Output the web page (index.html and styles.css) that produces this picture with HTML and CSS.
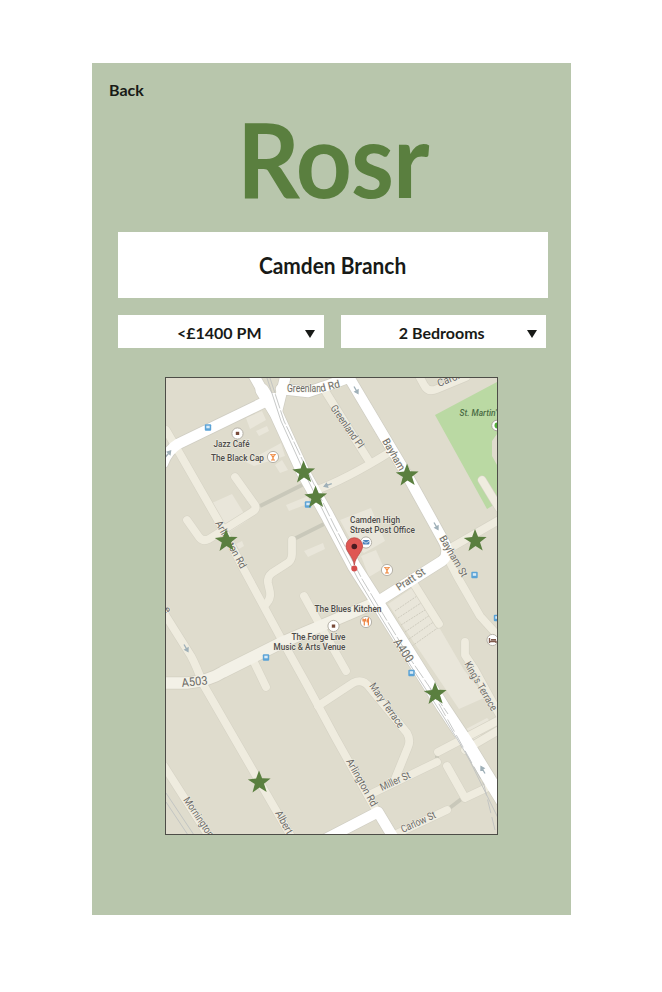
FILE: index.html
```html
<!DOCTYPE html>
<html lang="en">
<head>
<meta charset="utf-8">
<title>Rosr</title>
<link rel="stylesheet" href="styles.css">
</head>
<body>
<main class="panel">
  <a class="back">Back</a>
  <h1 class="logo"><span class="logo-text">Rosr</span></h1>
  <div class="branch"><span class="branch-name">Camden Branch</span></div>
  <div class="filters">
    <div class="select"><span>&lt;£1400 PM</span><i class="arrow"></i></div>
    <div class="select"><span>2 Bedrooms</span><i class="arrow"></i></div>
  </div>
  <div class="map">
  <svg viewBox="166 378 331 456" width="331" height="456">
    <defs>
      <polygon id="star" points="0,-11.5 3.1,-3.8 11.6,-3.6 5,1.7 7.7,10 0.5,5.4 -6.5,10.5 -4.2,2 -11.2,-2.6 -2.9,-3.5"/>
      <g id="stop"><rect x="-3.2" y="-3.2" width="6.4" height="6.400" rx="1" fill="#5ba3d6"/><rect x="-1.7" y="-1.8" width="3.400" height="2.600" fill="#d9ebf7"/></g>
      <circle id="poi" r="5.6" fill="#fff" stroke="#b5b1a7" stroke-width="1"/>
      <path id="way" d="M0 4V-1H-1.800L0 -4 1.800 -1H0" fill="#9fb0b8" stroke="#9fb0b8" stroke-width="1.300"/>
      <g id="glass"><use href="#poi"/><path d="M-3.2-3H3.2L.7.3V2.6H2V3.6H-2V2.6H-.7V.3Z" fill="#f08a40"/><path d="M-1.4-1.8H1.4" stroke="#fff" stroke-width=".7"/></g>
      <g id="lanes">
        <path d="M166 430L180 454 223 529 243 568 283 642 307 685 335 737 377 812"/>
        <path d="M235 477L255 505Q257 509 252 512L209 539Q203 542 199 537L187 520"/>
        <path d="M292 540V554Q292 561 286 564L272 573Q267 577 268 583L270 592Q271 599 266 604"/>
        <path d="M322 386L369 461M314 491Q345 480 390 452"/>
        <path d="M418 374L424 385Q428 393 437 389L466 377"/>
        <path d="M482 480L499 508M447 550L499 520M445 553L457 576 480 616 499 637"/>
        <path d="M164 613L191 656Q196 665 203 684L292 838"/>
        <path d="M253 660L266 687M304 596L320 625 346 671"/>
        <path d="M318 706L353 683Q363 678 370 688L407 733Q411 740 408 747L395 779"/>
        <path d="M371 794L437 762M438 752L499 720M465 750L499 730M447 766L465 798 499 782M392 836L447 810"/>
        <path d="M465 642V655L475 670 499 714M414 584L439 624M164 766L210 838"/>
      </g>
      <g id="major">
        <path d="M163 463Q168 450 178 444L273 398"/>
        <path d="M253 374L276 415M286 374L276 415"/>
        <path d="M281 389L308 392 329 385 350 377M347 374L407 475 443 540Q451 554 442 561L377 602M320 842L378 812 396 842"/>
      </g>
      <path id="high" d="M262 390L276 413 303 472 327 515 354 566 377 602 402 642 443 707 467 743 502 800"/>
    </defs>
    <rect x="166" y="378" width="331" height="456" fill="#dfdccd"/>
    <path d="M435 415L497 382V434L492 441V456L497 465V503L487 509Z" fill="#bad9a3"/>
    <g fill="#e9e6da">
      <path d="M246 418L262 411 266 420 250 429ZM256 431L267 426 269 431 259 436ZM275 465L282 460 288 470 280 473ZM246 462L281 443 285 456 254 466ZM212 503L232 494 248 520 228 533ZM286 505L308 496 310 503 289 511Z"/>
      <path d="M304 551L323 543 325 549 308 557ZM340 520L371 508 385 541 364 553 353 544ZM361 556L376 550 384 568 369 577ZM388 604L415 586 464 670 486 697 459 709Z"/>
      <path d="M466 729L487 718 497 728 475 736ZM460 745L480 733 484 741 464 754ZM236 544L242 541 244 546 239 549Z"/>
    </g>
    <g stroke="#cfccbf" stroke-width="1" stroke-dasharray="2 1"><path d="M395 611L417 596M398 618L421 603M401 625L425 610M405 632L430 615M409 639L435 621M412 646L439 627"/></g>
    <g stroke="#c9c8ba" stroke-width="4" fill="none"><path d="M260 506L304 484M292 540L330 521M447 810L464 797M437 760V752"/></g>
    <g fill="none" stroke-linecap="round" stroke-linejoin="round">
      <use href="#lanes" stroke="#d6d3c5" stroke-width="9"/>
      <path d="M162 683H187Q209 681 223 672L283 642 370 605" stroke="#d3d0c2" stroke-width="13"/>
      <use href="#major" stroke="#d0cec3" stroke-width="12"/>
      <use href="#high" stroke="#d0cec3" stroke-width="14.500"/>
      <use href="#lanes" stroke="#efecdf" stroke-width="7.8"/>
      <path d="M162 683H187Q209 681 223 672L283 642 370 605" stroke="#f3f1e7" stroke-width="11.5"/>
      <use href="#major" stroke="#fff" stroke-width="10.5"/>
      <use href="#high" stroke="#fff" stroke-width="13"/>
    </g>
    <g fill="none" stroke="#bfc2c1" stroke-width=".9">
      <path d="M267 378L281 421 305 474 330 525 358 579 382 619 407 660 445 719 468 757 499 820"/>
      <path d="M270 378L284 421 309 474 334 525 362 579 386 619 411 660 448 714" stroke-dasharray="15 2"/>
      <path d="M430 688L463 747 484 785 495 830" stroke-dasharray="14 4"/>
      <path d="M166 793L196 838M166 802L190 838"/>
    </g>
    <use href="#way" transform="translate(356 390) rotate(150)"/><use href="#way" transform="translate(168 454) rotate(40)"/>
    <use href="#way" transform="translate(436 526) rotate(150)"/><use href="#way" transform="translate(328 485) rotate(-110)"/>
    <use href="#way" transform="translate(186 648) rotate(150)"/><use href="#way" transform="translate(483 770) rotate(-30)"/>
    <use href="#stop" x="208" y="427.500"/><use href="#stop" x="308" y="504.500"/><use href="#stop" x="266" y="657.500"/><use href="#stop" x="411.500" y="673"/><use href="#stop" x="474.500" y="575"/><use href="#stop" x="497" y="618"/>
    <use href="#poi" x="237.500" y="433.500"/><rect x="235.8" y="431.8" width="3.4" height="3.2" fill="#784b3b"/>
    <use href="#poi" x="333.500" y="626"/><rect x="331.8" y="624.5" width="3.4" height="3.2" fill="#784b3b"/>
    <use href="#glass" x="273" y="457"/><use href="#glass" x="387" y="570"/>
    <use href="#poi" x="366" y="542.500"/><rect x="362.8" y="540" width="6.6" height="4.6" rx="1" fill="#4c83bd"/><path d="M363 541L366 543.2 369.3 541" fill="none" stroke="#fff" stroke-width=".7"/>
    <use href="#poi" x="366" y="622"/><path d="M364.3 619V625.5M363 618.5V621H365.6V618.5M368.4 625.5V618.5Q366.8 620 367.2 622H368.4" fill="none" stroke="#ee8543" stroke-width="1.2"/>
    <use href="#poi" x="492.5" y="640"/><path d="M489.500 638V643M489.500 641.5H496V643M491 639.8H496" fill="none" stroke="#805b4d" stroke-width="1.4"/>
    <circle cx="497" cy="425.500" r="5.300" fill="#fff" stroke="#aaa69c"/><circle cx="497.500" cy="425.500" r="3" fill="#54ae3c"/>
    <g class="place">
      <text x="213.500" y="447" textLength="36" lengthAdjust="spacingAndGlyphs">Jazz Café</text><text x="211" y="460.500" textLength="53" lengthAdjust="spacingAndGlyphs">The Black Cap</text>
      <text x="350" y="523" textLength="50" lengthAdjust="spacingAndGlyphs">Camden High</text><text x="350" y="532.500" textLength="65" lengthAdjust="spacingAndGlyphs">Street Post Office</text>
      <text x="314.500" y="612" textLength="67" lengthAdjust="spacingAndGlyphs">The Blues Kitchen</text><text x="291.500" y="640" textLength="54" lengthAdjust="spacingAndGlyphs">The Forge Live</text><text x="273.500" y="649.500" textLength="72" lengthAdjust="spacingAndGlyphs">Music &amp; Arts Venue</text>
      <text class="park" x="459.500" y="416" textLength="37" lengthAdjust="spacingAndGlyphs">St. Martin'</text>
    </g>
    <g class="road">
      <text transform="translate(287 392)" textLength="34" lengthAdjust="spacingAndGlyphs">Greenlan</text><text transform="translate(321 392) rotate(-14)" textLength="20" lengthAdjust="spacingAndGlyphs">d Rd</text>
      <text transform="translate(330 408) rotate(55)" textLength="50" lengthAdjust="spacingAndGlyphs">Greenland Pl</text>
      <text transform="translate(382 441) rotate(60)" textLength="35" lengthAdjust="spacingAndGlyphs">Bayham</text><text transform="translate(439 538) rotate(60)" textLength="46" lengthAdjust="spacingAndGlyphs">Bayham St</text>
      <text transform="translate(439 387) rotate(-22)" textLength="23" lengthAdjust="spacingAndGlyphs">Carol</text>
      <text transform="translate(399 591) rotate(-33)" textLength="32" lengthAdjust="spacingAndGlyphs">Pratt St</text>
      <text class="big" transform="translate(393 642) rotate(56)" textLength="26" lengthAdjust="spacingAndGlyphs">A400</text><text class="big" transform="translate(182 687) rotate(-6)" textLength="26" lengthAdjust="spacingAndGlyphs">A503</text>
      <text transform="translate(215 523) rotate(61)" textLength="53" lengthAdjust="spacingAndGlyphs">Arlington Rd</text>
      <text transform="translate(369 686) rotate(55)" textLength="52" lengthAdjust="spacingAndGlyphs">Mary Terrace</text>
      <text transform="translate(346 761) rotate(61)" textLength="53" lengthAdjust="spacingAndGlyphs">Arlington Rd</text>
      <text transform="translate(382 791) rotate(-25)" textLength="32" lengthAdjust="spacingAndGlyphs">Miller St</text><text transform="translate(403 833) rotate(-25)" textLength="37" lengthAdjust="spacingAndGlyphs">Carlow St</text>
      <text transform="translate(183 800) rotate(56)" textLength="46" lengthAdjust="spacingAndGlyphs">Mornington</text><text transform="translate(275 813) rotate(61)" textLength="25" lengthAdjust="spacingAndGlyphs">Albert</text>
      <text transform="translate(464 664) rotate(60)" textLength="55" lengthAdjust="spacingAndGlyphs">King's Terrace</text>
      <text transform="translate(163 609) rotate(60)">e</text>
    </g>
    <g fill="#5a7f3f"><use href="#star" x="303.500" y="472"/><use href="#star" x="315.500" y="497"/><use href="#star" x="407" y="475"/><use href="#star" x="226" y="540.500"/><use href="#star" x="475" y="540.500"/><use href="#star" x="435" y="693.500"/><use href="#star" x="259" y="782"/></g>
    <circle cx="354.300" cy="568.500" r="3" fill="#d64d4c"/>
    <path d="M354.300 565C353 556 346 552 346 546A8.300 8.300 0 0 1 362.600 546C362.600 552 355.600 556 354.300 565Z" fill="#df5753" stroke="#b64440" stroke-width=".7"/>
    <circle cx="354.300" cy="546.500" r="2.800" fill="#491b20"/>
  </svg>
  </div>
</main>
</body>
</html>
```
FILE: styles.css
```css
* { box-sizing: border-box; }
body {
  margin: 0;
  padding: 63px 0 0 92px;
  height: 992px;
  background: #fff;
  color: #181a17;
  font-family: Lato, "Open Sans", sans-serif;
  font-weight: 700;
}
.panel {
  width: 479.4px;
  height: 852px;
  padding: 17px 24px 0 26px;
  background: #b8c6ac;
}
.back {
  display: block;
  height: 20px;
  margin-left: -9px;
  font-size: 16px;
  line-height: 20px;
}
.logo {
  display: flex;
  justify-content: center;
  height: 124px;
  margin: 8px 0 0;
  color: #5a7f3f;
  font-size: 103px;
  line-height: 100px;
  font-weight: 700;
}
.logo-text {
  letter-spacing: -1px;
  transform: scaleX(.95);
}
.branch {
  display: flex;
  align-items: center;
  justify-content: center;
  width: 430px;
  height: 66px;
  background: #fff;
  font-size: 22px;
}
.branch-name { transform: scaleX(.95); }
.filters {
  display: flex;
  gap: 17px;
  margin-top: 17px;
}
.select {
  display: flex;
  align-items: center;
  justify-content: center;
  position: relative;
  width: 205.5px;
  height: 33px;
  padding: 2px 3px 0 0;
  background: #fff;
  font-size: 16px;
}
.arrow {
  position: absolute;
  right: 9px;
  top: 15px;
  border: solid transparent;
  border-width: 8px 5px 0;
  border-top-color: #181a17;
}
.map {
  width: 333px;
  height: 458px;
  margin: 29px 0 0 47px;
  border: 1px solid #4d4d47;
  overflow: hidden;
}
.map svg { display: block; }
.map text { font-family: Roboto, sans-serif; }
.place {
  font-size: 9px;
  font-weight: 500;
  fill: #4c4b49;
  stroke: #f1eee4;
  stroke-width: 1px;
  paint-order: stroke;
}
.park { font-style: italic; font-size: 8.5px; fill: #4b6c45; stroke: none; }
.road {
  font-size: 10.5px;
  font-weight: 400;
  fill: #6b6a66;
  stroke: #f3f1e7;
  stroke-width: 1px;
  paint-order: stroke;
}
.big { font-size: 12px; }
```
